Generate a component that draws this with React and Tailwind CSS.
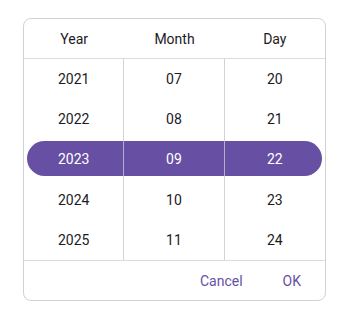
import React from "react";

export default function App() {
  // wheel columns: label + visible values, index 2 is the selected one
  const columns = [
    { label: "Year", values: ["2021", "2022", "2023", "2024", "2025"] },
    { label: "Month", values: ["07", "08", "09", "10", "11"] },
    { label: "Day", values: ["20", "21", "22", "23", "24"] },
  ];
  const selected = 2;

  return (
    <div className="w-[350px] h-[320px] bg-white pt-[18px] pl-[23px] font-['Roboto',sans-serif]">
      <div className="w-[303px] h-[283px] border border-[#d2d1d6] rounded-lg flex flex-col overflow-hidden">
        {/* Header */}
        <div className="grid grid-cols-3 h-10 shrink-0 border-b border-[#dcdbe0] text-sm text-[#1c1b1f]">
          {columns.map((col) => (
            <div key={col.label} className="flex items-center justify-center">
              {col.label}
            </div>
          ))}
        </div>

        {/* Wheels */}
        <div className="relative grid grid-cols-3 h-[202px] shrink-0 border-b border-[#dcdbe0]">
          {/* selection pill */}
          <div className="absolute left-[3px] right-[3px] top-[82px] h-[35px] rounded-full bg-[#6750a4]" />
          {columns.map((col, ci) => (
            <div
              key={col.label}
              className={
                ci < columns.length - 1
                  ? "relative flex flex-col border-r border-[#c9c6d4]/80"
                  : "relative flex flex-col"
              }
            >
              {col.values.map((v, i) => (
                <div
                  key={v}
                  className={
                    i === selected
                      ? "h-[40.2px] flex items-center justify-center text-sm text-white"
                      : "h-[40.2px] flex items-center justify-center text-sm text-[#1c1b1f]"
                  }
                >
                  {v}
                </div>
              ))}
            </div>
          ))}
        </div>

        {/* Actions */}
        <div className="flex-1 flex items-center justify-end gap-2 px-2">
          <button className="h-9 px-4 text-sm text-[#6750a4]">Cancel</button>
          <button className="h-9 px-4 text-sm text-[#6750a4]">OK</button>
        </div>
      </div>
    </div>
  );
}
